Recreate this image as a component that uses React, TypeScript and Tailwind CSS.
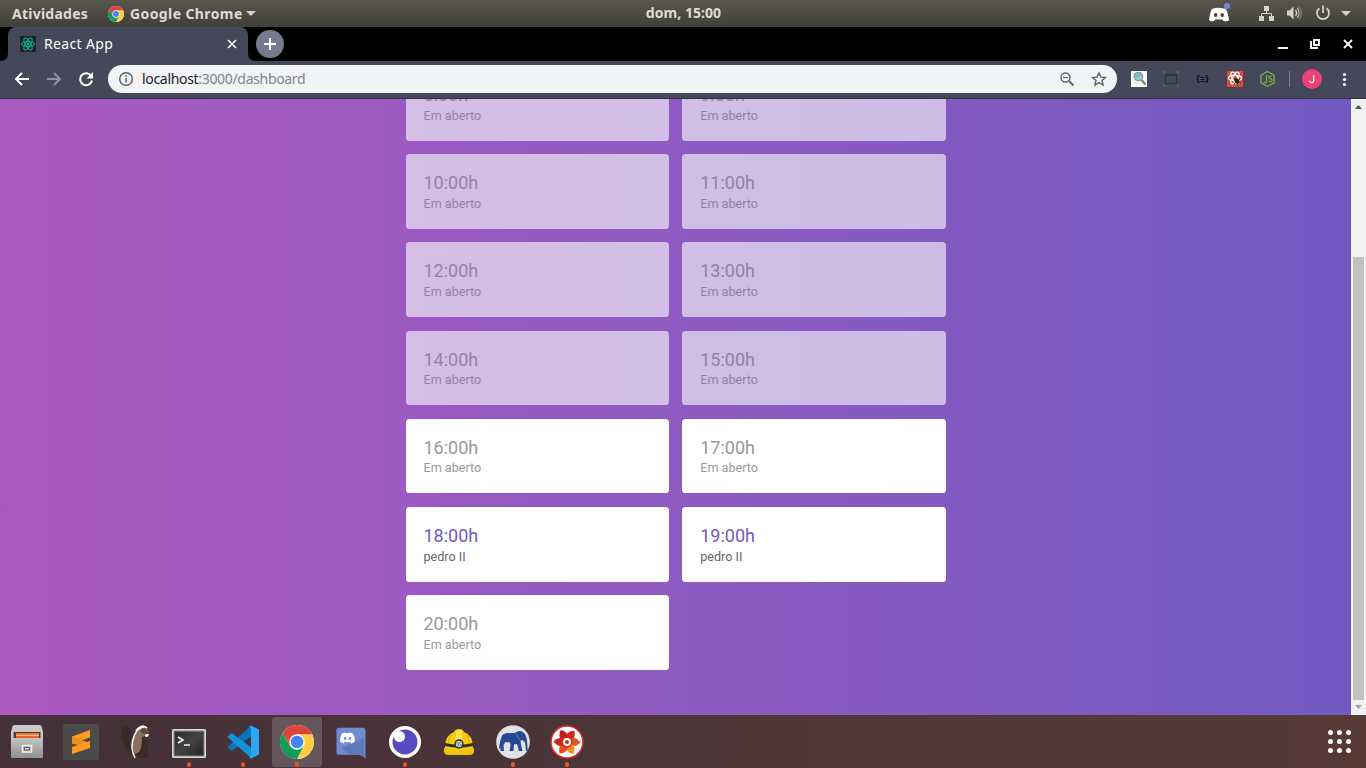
import React from 'react';
import { FaDiscord } from 'react-icons/fa';

const UI = "font-['Noto_Sans','Open_Sans',sans-serif]";

function ChromeLogo({ className }: { className: string }) {
  return (
    <svg viewBox="0 0 48 48" className={className}>
      <circle cx="24" cy="24" r="24" fill="#fff" />
      <path d="M24 13 H45.4 A24 24 0 0 1 24 48 L33.5 29.5 Z" fill="#ffcd40" />
      <path d="M3.8 11.2 L14.5 29.5 L24 35 L33.5 29.5 L24 48 A24 24 0 0 1 3.8 11.2 Z" fill="#0f9d58" />
      <path d="M3.8 11.2 A24 24 0 0 1 45.4 13 H24 L14.5 29.5 Z" fill="#db4437" />
      <circle cx="24" cy="24" r="11" fill="#f1f1f1" />
      <circle cx="24" cy="24" r="8.8" fill="#4285f4" />
    </svg>
  );
}

function Atom({ stroke, className }: { stroke: string; className: string }) {
  return (
    <svg viewBox="0 0 16 16" className={className} fill="none" stroke={stroke}>
      <ellipse cx="8" cy="8" rx="6.7" ry="2.6" />
      <ellipse cx="8" cy="8" rx="6.7" ry="2.6" transform="rotate(60 8 8)" />
      <ellipse cx="8" cy="8" rx="6.7" ry="2.6" transform="rotate(120 8 8)" />
      <circle cx="8" cy="8" r="1" fill={stroke} />
    </svg>
  );
}

function SystemBar() {
  return (
    <header className={`${UI} grid h-[27px] grid-cols-3 items-center bg-linear-to-b from-[#59564d] to-[#403f39] text-[14px] font-bold text-[#dfdbd2]`}>
      <div className="flex items-center pl-3">
        <span className="w-24 whitespace-nowrap tracking-[0.24px]">Atividades</span>
        <ChromeLogo className="size-4" />
        <span className="ml-1.5 w-[112px] whitespace-nowrap tracking-[0.4px]">Google Chrome</span>
        <svg className="ml-1 h-[5px] w-2.5" viewBox="0 0 10 5"><path d="M0 0h10L5 5z" fill="#d5d1c8" /></svg>
      </div>
      <div className="pb-0.5 pl-px text-center tracking-[0.05px]">dom, 15:00</div>
      <svg className="h-[27px] w-40 justify-self-end" viewBox="1206 0 160 27" fill="none">
        <path d="M1213 8.5q5-1.6 11 0 2.4 0 3.4 4l1.8 7.5q-2 2-5.7 1l-1.3-1.5h-7l-1.3 1.5q-3 .9-4.9-1l1.5-8q.7-3 2.5-3.5z" fill="#fff" />
        <ellipse cx="1215.6" cy="15" rx="1.8" ry="1.9" fill="#4b4942" /><ellipse cx="1222.2" cy="15" rx="1.8" ry="1.9" fill="#4b4942" />
        <circle cx="1227" cy="6" r="3" fill="#7289da" />
        <path d="M1264 6h5v5h-5zM1259 16h5v5h-5zM1269 16h5v5h-5z" fill="#d5d1c8" />
        <path d="M1266.5 11v2.5M1261.5 16v-2.5h10V16" stroke="#d5d1c8" />
        <path d="M1287 10.5h2.5l4-4v13l-4-4h-2.5z" fill="#d5d1c8" />
        <path d="M1295.5 10q2.2 3 0 6" stroke="#d5d1c8" strokeWidth="1.4" />
        <path d="M1297.2 8q3.7 5 0 10" stroke="#b5b1a8" strokeWidth="1.3" />
        <path d="M1299 6.5q4.7 6.5 0 13" stroke="#85827a" strokeWidth="1.2" />
        <path d="M1319.4 8.2a6 6 0 1 0 7.2 0M1323 5.5v7.5" stroke="#d5d1c8" strokeWidth="1.8" />
        <path d="M1341 11h10l-5 5z" fill="#d5d1c8" />
      </svg>
    </header>
  );
}

function TabStrip() {
  return (
    <div className="flex h-[34px] bg-black">
      <svg className="h-[34px] w-2" viewBox="0 0 8 34"><path d="M0 34q8 0 8-8v8z" fill="#45475a" /></svg>
      <div className={`${UI} flex w-60 items-center rounded-t-lg bg-[#45475a] pl-3 pr-2.5 text-[14px] text-white`}>
        <div className="size-4 bg-[#20232a]"><Atom stroke="#00b894" className="size-4" /></div>
        <span className="ml-2 whitespace-nowrap pb-0.5 tracking-[0.35px]">React App</span>
        <svg className="ml-auto size-3" viewBox="0 0 12 12"><path d="M2 2l8 8M10 2l-8 8" stroke="#f3f3f6" strokeWidth="1.7" /></svg>
      </div>
      <svg className="h-[34px] w-2" viewBox="0 0 8 34"><path d="M0 26q0 8 8 8H0z" fill="#45475a" /></svg>
      <svg className="mt-[3px] size-7" viewBox="0 0 28 28"><circle cx="14" cy="14" r="14" fill="#777a8f" /><path d="M14 8v12M8 14h12" stroke="#fff" strokeWidth="2" /></svg>
      <svg className="ml-auto h-[34px] w-[94px]" viewBox="1272 27 94 34" fill="none" stroke="#f2f2f2" strokeWidth="2">
        <path d="M1278 48h10M1314 40h5v5h-5zM1311 41v7h7" />
        <path d="M1344 40l8 8M1352 40l-8 8" />
      </svg>
    </div>
  );
}

function Toolbar() {
  return (
    <div className="flex h-[38px] items-start border-b border-[#30323f] bg-[#45475a]">
      <svg className="h-9 w-[108px]" viewBox="0 61 108 36" fill="none" strokeWidth="2">
        <path d="M29 79H16M22 73l-6 6 6 6" stroke="#fff" />
        <path d="M47 79h13M54 73l6 6-6 6" stroke="#8f909c" />
        <path d="M91.2 76A6 6 0 1 0 92 80.5" stroke="#fff" />
        <path d="M93 72v6.5h-6.5z" fill="#fff" />
      </svg>
      <div className="mt-1 flex h-7 w-[1009px] items-center rounded-full bg-[#f1f3f4] pl-2.5">
        <svg className="size-4" viewBox="0 0 16 16" fill="none" stroke="#5f6368" strokeWidth="1.5"><circle cx="8" cy="8" r="6.3" /><path d="M8 7v4.5M8 4v1.7" /></svg>
        <span className={`${UI} ml-2 whitespace-nowrap pb-px text-[14px] tracking-[-0.32px] text-[#202124]`}>localhost<span className="text-[#80868b]">:3000/dashboard</span></span>
        <svg className="ml-auto h-7 w-[64px]" viewBox="1053 65 64 28" fill="none" stroke="#5f6368">
          <circle cx="1065.5" cy="77.5" r="4.5" strokeWidth="1.4" /><path d="M1069 81l4.5 4.5" strokeWidth="1.8" /><path d="M1063 77.5h5" />
          <path d="M1099 72.9l1.9 4.2 4.6.4-3.5 3 1.1 4.5-4.1-2.4-4.1 2.4 1.1-4.5-3.5-3 4.6-.4z" strokeWidth="1.4" />
        </svg>
      </div>
      <svg className="h-9 w-[249px]" viewBox="1117 61 249 36" fill="none">
        <path d="M1131 71h16v16h-16z" fill="#f9fafb" />
        <path d="M1132 74h9M1132 77h8M1132 80h7M1134 83h6" stroke="#d2d5d8" />
        <circle cx="1138.5" cy="76.5" r="4.2" fill="#8fc5dc" stroke="#7f959f" strokeWidth="1.2" />
        <path d="M1136 77q2-4 5-1" stroke="#85b766" strokeWidth="1.5" />
        <path d="M1141.5 80l4 4.5" stroke="#7f8b52" strokeWidth="2.5" />
        <path d="M1165.5 74.5h11v9h-11z" stroke="#303238" /><path d="M1165 75h12" stroke="#303238" strokeWidth="2" />
        <path d="M1163 71h4l-4 4zM1179 71h-4l4 4zM1163 87h4l-4-4zM1179 87h-4l4-4z" fill="#2e7d32" />
        <path d="M1199.5 75.500q-1.500 0-1.500 1.500 0 2-1.500 2 1.500 0 1.500 2 0 1.500 1.500 1.500M1205.500 75.500q1.500 0 1.500 1.500 0 2 1.500 2-1.500 0-1.500 2 0 1.500-1.500 1.500" stroke="#15161a" strokeWidth="1.5" />
        <path d="M1200.500 77.500h4M1200.500 79.500h4M1200.500 81.500h4" stroke="#15161a" />
        <path d="M1227 71h16v16h-16z" fill="#dd4b39" />
        <g stroke="#fff" strokeWidth="1.2"><ellipse cx="1235" cy="78" rx="6.5" ry="2.6" /><ellipse cx="1235" cy="78" rx="6.5" ry="2.6" transform="rotate(60 1235 78)" /><ellipse cx="1235" cy="78" rx="6.5" ry="2.6" transform="rotate(120 1235 78)" /></g>
        <ellipse cx="1237" cy="81" rx="2.2" ry="3.2" transform="rotate(-35 1237 81)" fill="#272020" />
        <path d="M1234 79l7 4M1234 84l6-5M1236 78l2 8" stroke="#272020" strokeWidth=".9" />
        <path d="M1267.5 71.5l6.5 3.7v7.6l-6.5 3.7-6.5-3.7v-7.6z" stroke="#6fae3c" strokeWidth="1.4" />
        <path d="M1266.5 75v6q0 2-2 1.5l-1-.5M1272 76.5q-3-1-3.3.7 0 1.2 1.7 1.5 2 .3 1.6 2-.5 1.5-3.5.5" stroke="#6fae3c" strokeWidth="1.3" />
        <path d="M1289.5 71v16" stroke="#77798a" />
        <circle cx="1312" cy="79" r="10" fill="#ec407a" />
        <text x="1312" y="83" textAnchor="middle" fontFamily="Roboto, sans-serif" fontSize="11" fill="#fff">J</text>
        <g fill="#fff"><circle cx="1344.5" cy="74.5" r="1.6" /><circle cx="1344.5" cy="79.5" r="1.6" /><circle cx="1344.5" cy="84.5" r="1.6" /></g>
      </svg>
    </div>
  );
}

type Slot = { time: string; past?: boolean; who?: string };
const slots: Slot[] = [
  { time: '8:00h', past: true }, { time: '9:00h', past: true },
  { time: '10:00h', past: true }, { time: '11:00h', past: true },
  { time: '12:00h', past: true }, { time: '13:00h', past: true },
  { time: '14:00h', past: true }, { time: '15:00h', past: true },
  { time: '16:00h' }, { time: '17:00h' },
  { time: '18:00h', who: 'pedro II' }, { time: '19:00h', who: 'pedro II' },
  { time: '20:00h' },
];

function Dashboard() {
  return (
    <main className="flex h-[616px] overflow-hidden font-[Roboto,sans-serif]">
      <div className="flex-1 overflow-hidden bg-linear-to-r from-[#ab59c1] to-[#7159c1]">
        <ul className="mx-auto -mt-[33.05px] grid w-[540px] grid-cols-2 gap-[13.5px]">
          {slots.map((s) => (
            <li key={s.time} className={`h-[74.7px] rounded-[3.6px] bg-white p-[18px] ${s.past ? 'opacity-60' : ''}`}>
              <strong className={`block text-[18px] leading-[21px] font-normal ${s.who ? 'text-[#7159c1]' : 'text-[#999]'}`}>{s.time}</strong>
              <span className={`mt-[2.7px] block text-[12.6px] leading-[15px] ${s.who ? 'text-[#666]' : 'text-[#999]'}`}>{s.who ?? 'Em aberto'}</span>
            </li>
          ))}
        </ul>
      </div>
      <div className="flex w-[15px] flex-col items-center bg-[#f1f1f1]">
        <svg className="h-[158px] w-[15px]" viewBox="0 0 15 158"><path d="M4 10h7L7.5 6z" fill="#505050" /></svg>
        <div className="h-[443px] w-[11px] bg-[#c1c1c1]" />
        <svg className="h-[15px] w-[15px]" viewBox="0 0 15 15"><path d="M4 5h7l-3.5 4z" fill="#a3a3a3" /></svg>
      </div>
    </main>
  );
}

function Files() {
  return (
    <>
      <path d="M13 8h24q3 0 3 3l1 4v24q0 2-2 2H11q-2 0-2-2V15l1-4q0-3 3-3z" fill="#c9c9c7" />
      <path d="M11.5 15h27v6h-27z" fill="#4c4038" />
      <path d="M14 16h23v5H14z" fill="#e9642b" /><path d="M14 17.5h23V19H14z" fill="#f8b979" />
      <path d="M9 21h32v18q0 2-2 2H11q-2 0-2-2z" fill="url(#drawer)" />
      <path d="M20.5 28.5h9V35h-9z" fill="#aaa" stroke="#f2f2f2" strokeWidth="1.5" /><path d="M22.5 30.5h5V33h-5z" fill="#eee" stroke="#555" />
    </>
  );
}

function Sublime() {
  return (
    <>
      <rect x="7" y="7" width="36" height="36" rx="2" fill="#4b4b4a" />
      <path d="M16 19.5L34 13v7.5L16 26.5z" fill="#ff9a1f" />
      <path d="M16 19.5v7L34 31v-5z" fill="#f08c1c" />
      <path d="M16 30l18-6v7l-18 6z" fill="#ff9a1f" />
    </>
  );
}

function Beaver() {
  return (
    <>
      <path d="M15.500 9.500c4.500 0 6.500 4 6 9l-1 9 3 11c-6-3-12.500-13-12.500-22 0-4 2-7 4.500-7z" fill="#392a26" />
      <path d="M29 19c5-1 7 2 8.500 7 1.500 5 1 8 .5 11l.5 4H27l-3-7z" fill="#3b2b26" />
      <path d="M25 16l4-6 8 1 2 4-2 3-5 2c0 8-1 12-3 15l-4 2c-3-7-3-14 0-21z" fill="#8a705d" />
      <path d="M31 11l6 1 2 4-4 2-4-3z" fill="#624a3d" />
      <path d="M25 41c-3.500-7-4-15-.5-23 2-4 3.500-7 6-8q4-1.500 6.500 1" fill="none" stroke="#fff" strokeWidth="1.500" />
      <path d="M25 14q4-6 9-5.500l3.500 2q-6-.5-8.500 2.500z" fill="#fff" />
      <path d="M35 17.500l4-.5-1 2.500-2.500.5z" fill="#fff" />
    </>
  );
}

function Terminal() {
  return (
    <>
      <rect x="8" y="12" width="34" height="29" rx="1.5" fill="#d6d6d3" />
      <rect x="10" y="14" width="30" height="25" fill="url(#screen)" stroke="#8a8a86" />
      <path d="M14 20l5 3-5 3M20 28h6" stroke="#f4f4f4" strokeWidth="1.6" fill="none" />
    </>
  );
}

function Code() {
  return (
    <>
      <path d="M33 8.5L9.500 30l3 3.500h2L35 18z" fill="#0b73b7" />
      <path d="M9.500 20l3-3.500h2L35 32l-2 9z" fill="#1590db" />
      <path d="M33 8.500l8 4v25l-8 4-1.500-1 1.500-3V12.500L31.500 9.500z" fill="#29a9f2" />
    </>
  );
}

function Discord() {
  return (
    <>
      <path d="M13 10.700h24q2.500 0 2.500 2.500v28L34 37.700H13q-2.500 0-2.500-2.500v-22q0-2.500 2.500-2.500z" fill="#728bd0" />
      <path d="M38 21v19l-4-3H23l-8-6z" fill="#526cae" opacity=".6" />
      <FaDiscord x="13.5" y="13" width="23" height="23" color="#fff" />
    </>
  );
}

function Insomnia() {
  return (
    <>
      <circle cx="25" cy="25" r="16" fill="#fff" />
      <circle cx="25" cy="25" r="12.5" fill="#5849be" />
      <circle cx="19.5" cy="19.5" r="5.5" fill="#fff" />
    </>
  );
}

function Helmet() {
  return (
    <>
      <path d="M10 31q15-3 30 0v4q-1 3-4 3H14q-3 0-4-3z" fill="#edc30b" />
      <path d="M11 31q0-13 9-16 1-3 5-3t5 3q9 3 9 16l-6 2H17z" fill="#f5cb14" />
      <path d="M22 14q3-2 6 0v12h-6z" fill="#ffe34e" /><path d="M17.5 18q-3 4-3 8M32.5 18q3 4 3 8" stroke="#d9a900" fill="none" />
      <path d="M11 26q14 3 28 0v3q-14 3.5-28 0z" fill="#33332c" />
      <circle cx="25" cy="27" r="4.7" fill="#292929" /><circle cx="25" cy="27" r="3.3" fill="#c9cbc8" /><path d="M22.500 25.500l2.500 1 2-2M25 27l-1.500 2.500M26 27.500l2 1" stroke="#555" strokeWidth=".8" fill="none" />
    </>
  );
}

function Elephant() {
  return (
    <>
      <circle cx="25" cy="25" r="16.8" fill="#e1e2e4" />
      <path d="M13.500 21c0-3.500 3-5 7-5 3.500 0 6 .5 8-1 3-2 6-1 7.500 1 2 2 2.500 4.500 3 7l.8 11h-1.800l-1-9-2.500-2-2 .5.500 4 1.500 6.500h-3.500l-2-7-3 .5-.5 6.500h-4l1-6-.5-2.500-4.500-.5-2 3 .5 6h-3.500l0-5 1-4z" fill="#28489a" />
      <path d="M14 20q-2.500 4-2.500 8l-.5 4 3-2 1.500-6z" fill="#28489a" />
      <path d="M28.500 16.500q1 5 3.500 6M34.500 23.500l2 1.500" stroke="#7f90bd" strokeWidth=".7" fill="none" />
    </>
  );
}

const petals = [
  { angle: 30, color: '#cf2a20' }, { angle: 90, color: '#e35420' },
  { angle: 150, color: '#f58a1f' }, { angle: 210, color: '#e34a20' },
  { angle: 270, color: '#c9241f' }, { angle: 330, color: '#bb201f' },
];
function Flower() {
  return (
    <>
      <circle cx="25" cy="25" r="16" fill="#fff" stroke="#e3242b" strokeWidth="1.5" />
      {petals.map(({ angle, color }) => (
        <path key={angle} d="M22 24L21 17q1-3 4.500-5.500 3 2.500 3.500 5.500l-1 7z" transform={`rotate(${angle} 25 25)`} fill={color} />
      ))}
      <circle cx="25" cy="25" r="5.5" fill="#d62b20" />
      <circle cx="25" cy="25" r="4" fill="#fff" /><circle cx="25" cy="25" r="2" fill="#d62b20" />
    </>
  );
}

const apps: { id: string; Icon: () => React.JSX.Element; open?: boolean; active?: boolean }[] = [
  { id: 'files', Icon: Files }, { id: 'sublime', Icon: Sublime }, { id: 'beaver', Icon: Beaver },
  { id: 'terminal', Icon: Terminal, open: true }, { id: 'code', Icon: Code, open: true },
  { id: 'chrome', Icon: () => <></>, open: true, active: true }, { id: 'discord', Icon: Discord },
  { id: 'insomnia', Icon: Insomnia, open: true }, { id: 'helmet', Icon: Helmet },
  { id: 'elephant', Icon: Elephant, open: true }, { id: 'flower', Icon: Flower, open: true },
];

function Dock() {
  return (
    <footer className="flex h-[53px] items-center gap-1 bg-linear-to-r from-[#443039] to-[#553a34] pl-0.5">
      {apps.map(({ id, Icon, open, active }) => (
        <div key={id} className={`relative flex size-[50px] items-center justify-center rounded-[3px] ${active ? 'bg-[#66555b]' : ''}`}>
          {active ? <ChromeLogo className="size-[34px]" /> : (
            <svg className="size-[50px]" viewBox="0 0 50 50">
              <defs>
                <linearGradient id="drawer" x1="0" y1="0" x2="0" y2="1"><stop stopColor="#c4c4c2" /><stop offset="1" stopColor="#8f8f8d" /></linearGradient>
                <linearGradient id="screen" x1="0" y1="0" x2="1" y2="1"><stop stopColor="#2b2c2b" /><stop offset=".5" stopColor="#414241" /><stop offset="1" stopColor="#222" /></linearGradient>
              </defs>
              <Icon />
            </svg>
          )}
          {open && <i className="absolute bottom-0 left-[22.5px] size-[4.6px] rounded-full bg-[#e95420]" />}
        </div>
      ))}
      <div className="mr-[15.5px] ml-auto grid grid-cols-3 gap-[4.4px]">
        {Array.from({ length: 9 }, (_, i) => <i key={i} className="size-[4.6px] rounded-full bg-white" />)}
      </div>
    </footer>
  );
}

export default function App() {
  return (
    <div className="h-[768px] w-[1366px] overflow-hidden">
      <SystemBar />
      <TabStrip />
      <Toolbar />
      <Dashboard />
      <Dock />
    </div>
  );
}
